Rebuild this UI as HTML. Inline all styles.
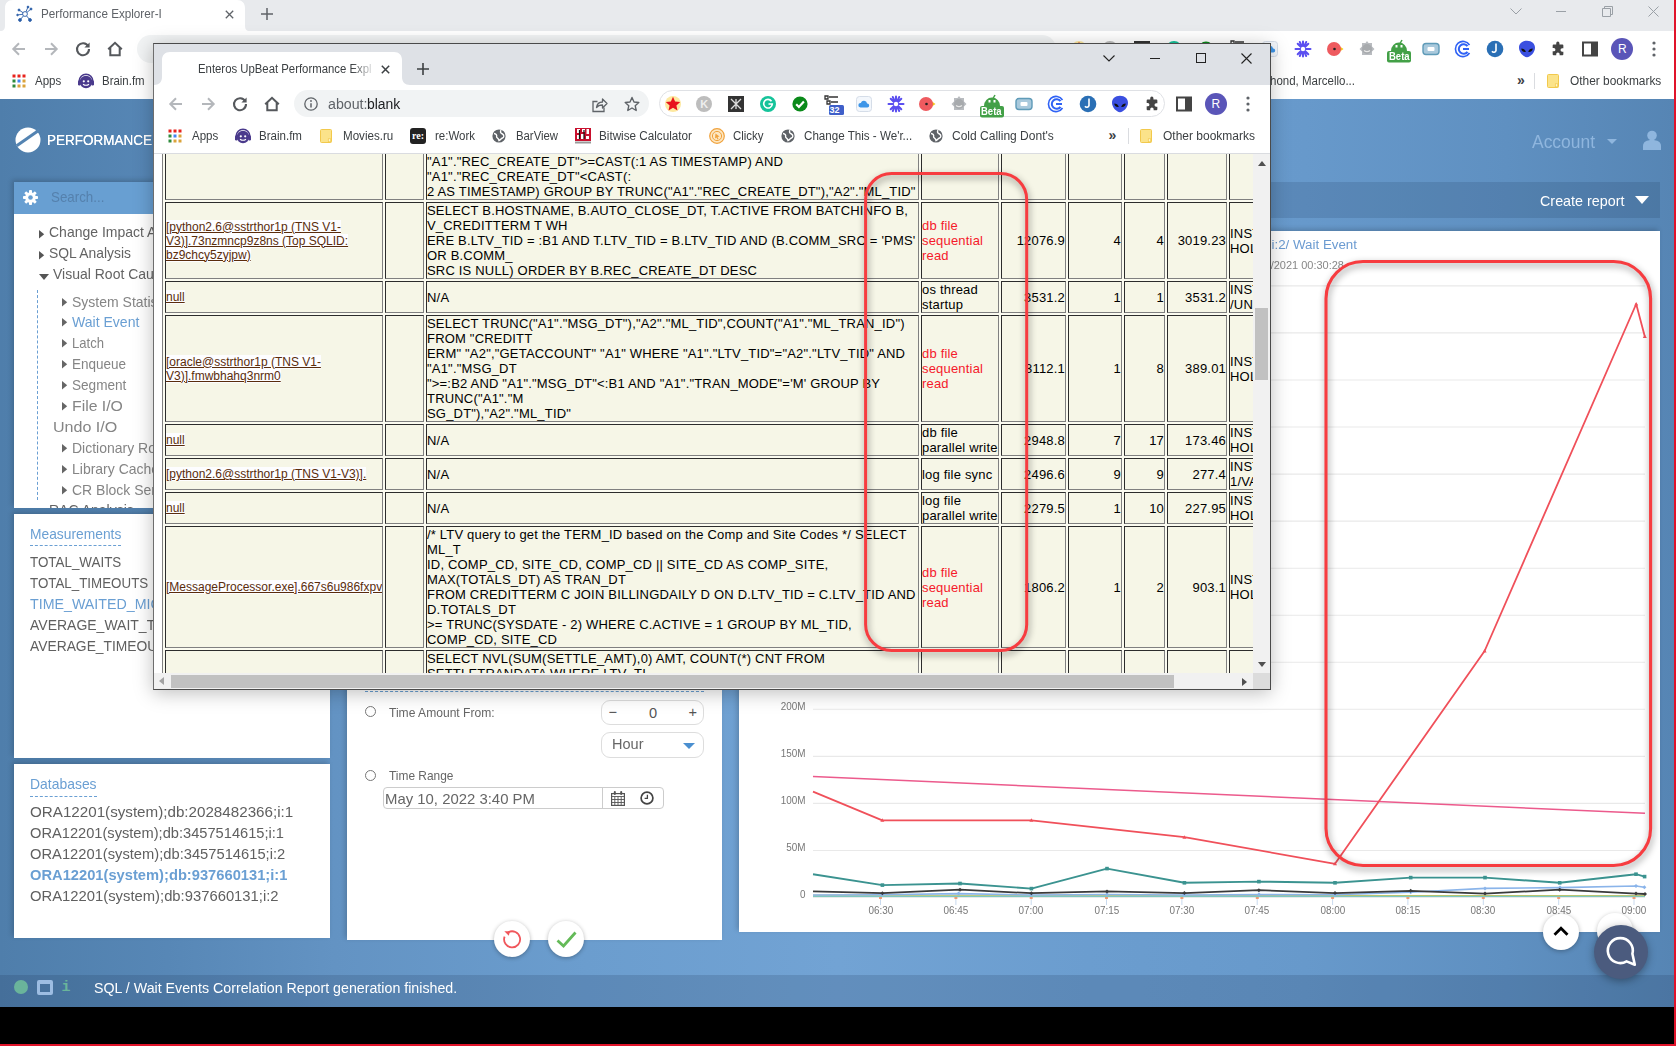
<!DOCTYPE html>
<html lang="en"><head><meta charset="utf-8"><title>Performance Explorer-I</title>
<style>

html,body{margin:0;padding:0}
body{width:1676px;height:1046px;overflow:hidden;position:relative;background:#000;font-family:"Liberation Sans",sans-serif}
.t{position:absolute;white-space:nowrap;transform-origin:0 50%;display:block}
.abs{position:absolute}
svg{position:absolute;overflow:visible}
#page{position:absolute;left:0;top:99px;width:1674px;height:908px;overflow:hidden;
 background:linear-gradient(90deg,#4f7eab 0%,#5787b6 10%,#6393c3 20%,#6b9dce 35%,#72a3d4 50%,#6b9dcf 65%,#6799cb 78%,#5f90c1 90%,#5685b4 100%)}
.panel{position:absolute;background:#fff;overflow:hidden;box-shadow:-2px -2px 5px rgba(0,0,0,.18)}
#popup{position:absolute;left:153px;top:43px;width:1118px;height:647px;background:#dee1e6;box-shadow:0 0 14px 2px rgba(0,0,0,.45);overflow:hidden}
#view{position:absolute;left:1px;top:111px;width:1099px;height:519px;background:#fff;overflow:hidden}
table.g{position:absolute;border-collapse:separate;border-spacing:2px;table-layout:fixed;background:#fbfbf0;border:1px solid;border-color:#808080 #2c2c2c #2c2c2c #808080;font-size:13px;line-height:15px;color:#000}
table.g td{border:1px solid;border-color:#2c2c2c #808080 #808080 #2c2c2c;background:#f6f6e7;padding:0;letter-spacing:.19px;white-space:nowrap;overflow:hidden;vertical-align:middle}
table.g td.n{text-align:right}
table.g td.r{color:#f5192b}
table.g a{font-size:12px;line-height:14px;color:#5a2c0c;background:#fdfdff;text-decoration:underline}
table.g td.l{line-height:14px;font-size:12px;letter-spacing:0}

</style></head>
<body>
<div id="outer"><div style="position:absolute;left:0px;top:0px;width:1674px;height:31px;background:#e8eaed"></div><div style="position:absolute;left:0px;top:31px;width:1674px;height:68px;background:#fff"></div><svg style="left:0;top:0" width="260" height="31" viewBox="0 0 260 31"><path d="M0 31c4 0 5-2 5-6V8c0-5 3-8 8-8h224c5 0 8 3 8 8v17c0 4 1 6 5 6z" fill="#fff"/></svg><svg style="left:16px;top:5px" width="18" height="18" viewBox="0 0 18 18"><g stroke="#2a5ea8" stroke-width=".9" fill="#2a5ea8"><path d="M9 9L3 5M9 9l6-5M9 9l5 6M9 9l-5 6M9 9l-8 1M9 9l3-7" fill="none"/><circle cx="9" cy="9" r="2.400" fill="#fff"/><circle cx="3" cy="5" r="1"/><circle cx="15" cy="4" r="1"/><circle cx="14" cy="15" r="1.400"/><circle cx="4" cy="15" r="1.400"/><circle cx="1.500" cy="10" r=".8"/><circle cx="12" cy="2" r=".9"/></g></svg><span class="t" id="t1" style="left:41.2px;top:6.5px;font-size:12px;line-height:15px;color:#5f6368;transform:scaleX(0.9738);">Performance Explorer-I</span><svg style="left:224.500px;top:9.500px" width="9" height="9" viewBox="0 0 9 9"><path d="M.8.800l7.400 7.400M8.200.800L.8 8.200" stroke="#5f6368" stroke-width="1.300"/></svg><svg style="left:260.500px;top:8px" width="12" height="12" viewBox="0 0 12 12"><path d="M6 0v12M0 6h12" stroke="#5f6368" stroke-width="1.500"/></svg><svg style="left:1510px;top:8px" width="12" height="7" viewBox="0 0 12 7"><path d="M.5.500L6 6l5.500-5.500" fill="none" stroke="#9aa0a6" stroke-width="1"/></svg><div style="position:absolute;left:1556px;top:11px;width:10px;height:1px;background:#9aa0a6"></div><svg style="left:1602px;top:6px" width="11" height="11" viewBox="0 0 11 11"><path d="M.5 2.500h8v8h-8zM2.500 2.500v-2h8v8h-2" fill="none" stroke="#9aa0a6" stroke-width="1"/></svg><svg style="left:1648px;top:6px" width="11" height="11" viewBox="0 0 11 11"><path d="M.5.500l10 10M10.500.500l-10 10" stroke="#9aa0a6" stroke-width="1"/></svg><svg style="left:11px;top:41px" width="16" height="16" viewBox="0 0 16 16"><path d="M14 8H2.5M8 2.3L2.3 8 8 13.7" fill="none" stroke="#b4b7bb" stroke-width="2"/></svg><svg style="left:43px;top:41px" width="16" height="16" viewBox="0 0 16 16"><path d="M2 8h11.5M8 2.3L13.7 8 8 13.7" fill="none" stroke="#b4b7bb" stroke-width="2"/></svg><svg style="left:75px;top:41px" width="16" height="16" viewBox="0 0 16 16"><path d="M13.2 5.2A6 6 0 1 0 14 8" fill="none" stroke="#55585c" stroke-width="2.1"/><path d="M14.6 1.4v5.2H9.4z" fill="#55585c"/></svg><svg style="left:107px;top:41px" width="16" height="16" viewBox="0 0 16 16"><path d="M1.2 8.3L8 1.8l6.8 6.5M3.3 6.8v7.4h9.4V6.8" fill="none" stroke="#55585c" stroke-width="2"/></svg><div style="position:absolute;left:137px;top:35px;width:919px;height:28px;background:#f1f3f4;border-radius:14px"></div><svg style="left:1070.0px;top:40.0px" width="18" height="18" viewBox="0 0 18 18"><circle cx="9" cy="9" r="8" fill="#fde9a0"/><path d="M9 1.800l2.100 4.700 5.100.500-3.800 3.400 1.100 5L9 12.800l-4.500 2.600 1.100-5L1.800 7l5.100-.5z" fill="#e8141c"/></svg><svg style="left:1102.0px;top:41.0px" width="16" height="16" viewBox="0 0 16 16"><circle cx="8" cy="8" r="8" fill="#bdbdbd"/></svg><span class="t" id="t2" style="left:1106.5px;top:42.0px;font-size:11px;line-height:14px;color:#eee;font-weight:700;">K</span><svg style="left:1134.0px;top:41.0px" width="16" height="16" viewBox="0 0 16 16"><rect width="16" height="16" fill="#333"/><path d="M3 3l10 10M13 3L3 13M8 3v10" stroke="#ddd" stroke-width="1.300" fill="none"/></svg><svg style="left:1166.0px;top:41.0px" width="16" height="16" viewBox="0 0 16 16"><circle cx="8" cy="8" r="8" fill="#15c39a"/><path d="M11.500 5.200A4.300 4.300 0 1 0 12.300 8H8.500" fill="none" stroke="#fff" stroke-width="1.600"/></svg><svg style="left:1198.0px;top:41.0px" width="16" height="16" viewBox="0 0 16 16"><circle cx="8" cy="8" r="7.600" fill="#0a8a1a"/><path d="M4.200 8.300l2.700 2.700 5-5.400" fill="none" stroke="#fff" stroke-width="2.200"/></svg><svg style="left:1228.0px;top:38.0px" width="22" height="22" viewBox="0 0 22 22"><path d="M3 3h3v3H3zM5 8h3v3H5zM7 4h9M9 9h7" stroke="#333" stroke-width="1.300" fill="none"/><rect x="7" y="12" width="15" height="10" rx="1.500" fill="#3f5fc9"/></svg><span class="t" id="t3" style="left:1236.0px;top:50.0px;font-size:9px;line-height:11px;color:#fff;font-weight:700;">32</span><svg style="left:1262.0px;top:41.0px" width="16" height="16" viewBox="0 0 16 16"><rect x=".5" y=".5" width="15" height="15" rx="3" fill="#f3f7fc" stroke="#d5dde8"/><path d="M4.500 11.500a2.300 2.300 0 0 1 .300-4.600 3.300 3.300 0 0 1 6.300.600 2 2 0 0 1 .2 4z" fill="#3d95e8"/></svg><svg style="left:1293.8px;top:40.0px" width="18" height="18" viewBox="0 0 18 18"><g stroke="#5b4ff0" stroke-width="2" stroke-linecap="round"><path d="M9 1.500v15M1.500 9h15M3.700 3.700l10.600 10.600M14.300 3.700L3.700 14.300M5.800 2l6.400 14M12.200 2L5.800 16"/></g><circle cx="9" cy="9" r="2.200" fill="#fff"/></svg><svg style="left:1326.0px;top:40.0px" width="18" height="18" viewBox="0 0 18 18"><path d="M11 4.500l6.500 4.500-6.500 4.500z" fill="#f5c518"/><circle cx="8" cy="9" r="7" fill="#ee5a5f"/><circle cx="8.500" cy="9" r="1.300" fill="#222"/></svg><svg style="left:1358.2px;top:40.0px" width="18" height="18" viewBox="0 0 18 18"><path d="M9 1l1.500 2h3.500v3.500l2.500 2.500-2.500 2.500V15H4v-3.500L1.500 9 4 6.500V3h3.500z" fill="#b9bcc0"/><circle cx="9" cy="9" r="5" fill="#a7aaad"/><path d="M6 10.500q3 2.400 6 0" stroke="#e8e8e8" stroke-width="1.200" fill="none"/></svg><svg style="left:1386.0px;top:36.0px" width="26" height="26" viewBox="0 0 26 26"><path d="M5 15a8 8.500 0 0 1 16 0z" fill="#43a047"/><rect x="9.500" y="9" width="2" height="2.500" fill="#fff"/><rect x="14.500" y="9" width="2" height="2.500" fill="#fff"/><path d="M16 4l-2 3.500" stroke="#43a047" stroke-width="1.500"/><rect x="1" y="15" width="24" height="11.500" rx="2" fill="#43a047"/></svg><span class="t" id="t4" style="left:1388.5px;top:51.0px;font-size:10px;line-height:12px;color:#fff;font-weight:700;transform:scaleX(0.9500);">Beta</span><svg style="left:1421.6px;top:40.0px" width="18" height="18" viewBox="0 0 18 18"><rect x="1" y="3.500" width="16" height="11" rx="3" fill="#a9c9dc" stroke="#5f9bb8" stroke-width="1.400"/><rect x="5.500" y="7" width="7" height="4" rx="1" fill="#fff"/></svg><svg style="left:1453.6px;top:40.0px" width="18" height="18" viewBox="0 0 18 18"><path d="M15.500 5A7.600 7.600 0 1 0 15.500 13" fill="none" stroke="#2f62f5" stroke-width="1.600"/><path d="M13.500 6.200A4.800 4.800 0 1 0 13.500 11.800" fill="none" stroke="#2f62f5" stroke-width="2"/><path d="M9 9h6" stroke="#2f62f5" stroke-width="2"/></svg><svg style="left:1485.6px;top:40.0px" width="18" height="18" viewBox="0 0 18 18"><circle cx="9" cy="9" r="8.300" fill="#2a6fb5"/><path d="M10 3.500v7a2.200 2.200 0 0 1-4 .8" fill="none" stroke="#fff" stroke-width="1.600"/></svg><svg style="left:1517.5px;top:40.0px" width="18" height="18" viewBox="0 0 18 18"><path d="M9 .8c5 0 8 3 8 7 0 4.500-4.500 9.400-8 9.400S1 12.300 1 7.800c0-4 3-7 8-7z" fill="#3a4fe0"/><path d="M3.300 8.500c2 0 4 1 4.500 3.500-2.500.5-4.500-1-4.500-3.500zM14.700 8.500c-2 0-4 1-4.500 3.500 2.500.5 4.500-1 4.500-3.500z" fill="#111"/></svg><svg style="left:1550.3px;top:41.0px" width="16" height="16" viewBox="0 0 16 16"><path transform="scale(.89)" d="M7 2.500a1.800 1.800 0 0 1 3.600 0V4H14a1 1 0 0 1 1 1v3.200h-1.300a1.900 1.900 0 0 0 0 3.800H15V15a1 1 0 0 1-1 1h-3.200v-1.300a1.900 1.900 0 0 0-3.800 0V16H4a1 1 0 0 1-1-1v-3.400h1.300a1.800 1.800 0 0 0 0-3.600H3V5a1 1 0 0 1 1-1h3z" fill="#444"/></svg><svg style="left:1582.3px;top:41.0px" width="16" height="16" viewBox="0 0 16 16"><rect x="1" y="1.500" width="14" height="13" fill="none" stroke="#444" stroke-width="2"/><rect x="9" y="1.500" width="6" height="13" fill="#444"/></svg><svg style="left:1611.0px;top:38.0px" width="22" height="22" viewBox="0 0 22 22"><circle cx="11" cy="11" r="11" fill="#5a55b8"/></svg><span class="t" id="t5" style="left:1618.0px;top:42.0px;font-size:12px;line-height:15px;color:#fff;">R</span><svg style="left:1652.3px;top:41.0px" width="4" height="16" viewBox="0 0 4 16"><circle cx="2" cy="2" r="1.600" fill="#5f6368"/><circle cx="2" cy="8" r="1.600" fill="#5f6368"/><circle cx="2" cy="14" r="1.600" fill="#5f6368"/></svg><svg style="left:11.5px;top:74px" width="14" height="14" viewBox="0 0 14 14"><rect x="0.5" y="0.5" width="3" height="3" fill="#e8231c"/><rect x="5.5" y="0.5" width="3" height="3" fill="#e8231c"/><rect x="10.5" y="0.5" width="3" height="3" fill="#e8231c"/><rect x="0.5" y="5.5" width="3" height="3" fill="#2e8b3d"/><rect x="5.5" y="5.5" width="3" height="3" fill="#4285f4"/><rect x="10.5" y="5.5" width="3" height="3" fill="#dba33b"/><rect x="0.5" y="10.5" width="3" height="3" fill="#2e8b3d"/><rect x="5.5" y="10.5" width="3" height="3" fill="#dba33b"/><rect x="10.5" y="10.5" width="3" height="3" fill="#dba33b"/></svg><span class="t" id="t6" style="left:35.4px;top:73.5px;font-size:12px;line-height:15px;color:#3c4043;transform:scaleX(0.9613);">Apps</span><svg style="left:77px;top:72px" width="18" height="18" viewBox="0 0 18 18"><circle cx="9" cy="10" r="6.2" fill="#4a3a8c"/><path d="M2.2 11V9a6.8 6.8 0 0 1 13.6 0v2" fill="none" stroke="#4a3a8c" stroke-width="1.6"/><rect x="1" y="8.5" width="2.8" height="5" rx="1.2" fill="#4a3a8c"/><rect x="14.2" y="8.5" width="2.8" height="5" rx="1.2" fill="#4a3a8c"/><circle cx="6.8" cy="9.3" r="1.1" fill="#fff"/><circle cx="11.2" cy="9.3" r="1.1" fill="#fff"/><path d="M6 12.2q3 2.2 6 0" stroke="#fff" stroke-width="1.1" fill="none"/></svg><span class="t" id="t7" style="left:102.4px;top:73.5px;font-size:12px;line-height:15px;color:#3c4043;transform:scaleX(0.9533);">Brain.fm</span><span class="t" id="t8" style="left:1270.0px;top:73.5px;font-size:12px;line-height:15px;color:#3c4043;transform:scaleX(0.9581);">hond, Marcello...</span><span class="t" id="t9" style="left:1517.0px;top:71.0px;font-size:14px;line-height:18px;color:#3c4043;font-weight:700;">»</span><div style="position:absolute;left:1534px;top:73px;width:1px;height:16px;background:#dadce0"></div><svg style="left:1547px;top:74px" width="12" height="14" viewBox="0 0 12 14"><path d="M1.5.5h9a1 1 0 0 1 1 1v11a1 1 0 0 1-1 1h-9a1 1 0 0 1-1-1v-11a1 1 0 0 1 1-1z" fill="#fbe38a" stroke="#f2c94c" stroke-width="1"/><rect x="8.3" y="9.8" width="2.4" height="3" fill="#fff6cf" stroke="#f2c94c" stroke-width=".7"/></svg><span class="t" id="t10" style="left:1569.7px;top:73.5px;font-size:12px;line-height:15px;color:#3c4043;transform:scaleX(0.9919);">Other bookmarks</span></div>
<div id="page"></div><svg style="left:15.200px;top:127.200px" width="26" height="26" viewBox="0 0 26 26"><circle cx="13" cy="13" r="12.500" fill="#fff"/><path d="M1.700 18.800L24.300 3" stroke="#5484b2" stroke-width="3"/></svg><span class="t" id="t11" style="left:47.4px;top:130.1px;font-size:14.6px;line-height:20px;color:#fff;transform:scaleX(0.9259);text-shadow:0 0 .6px #fff;">PERFORMANCE</span><span class="t" id="t12" style="left:1532.0px;top:128.6px;font-size:18.3px;line-height:25px;color:#8fb6de;transform:scaleX(0.9536);">Account</span><svg style="left:1607px;top:139px" width="10" height="5" viewBox="0 0 10 5"><path d="M0 0h10L5 5z" fill="#8fb6de"/></svg><svg style="left:1643px;top:130px" width="18" height="20" viewBox="0 0 18 20"><circle cx="9" cy="5.500" r="4.800" fill="#8fb6de"/><path d="M0 20v-4c0-4 3.500-6 9-6s9 2 9 6v4z" fill="#8fb6de"/></svg><div class="panel" style="left:14px;top:182px;width:316px;height:326px;"><div style="position:absolute;left:-14px;top:-182px;width:0;height:0"><div style="position:absolute;left:14px;top:182px;width:316px;height:32px;background:#689fd2"></div><svg style="left:22.500px;top:190px" width="15" height="15" viewBox="0 0 15 15"><g fill="#fff"><circle cx="7.500" cy="7.500" r="5.300"/><rect x="6" y="0" width="3" height="15" rx=".8" transform="rotate(0 7.500 7.500)"/><rect x="6" y="0" width="3" height="15" rx=".8" transform="rotate(45 7.500 7.500)"/><rect x="6" y="0" width="3" height="15" rx=".8" transform="rotate(90 7.500 7.500)"/><rect x="6" y="0" width="3" height="15" rx=".8" transform="rotate(135 7.500 7.500)"/></g><circle cx="7.500" cy="7.500" r="2.300" fill="#689fd2"/></svg><span class="t" id="t13" style="left:50.6px;top:187.3px;font-size:14.6px;line-height:20px;color:#5581ad;transform:scaleX(0.9143);">Search...</span><svg style="left:39px;top:230.0px" width="5.200" height="8.400" viewBox="0 0 5.200 8.400"><path d="M0 0l5.200 4.200L0 8.400z" fill="#555"/></svg><span class="t" id="t14" style="left:49.0px;top:222.1px;font-size:14.6px;line-height:20px;color:#636363;transform:scaleX(0.9589);">Change Impact Analysis</span><svg style="left:39px;top:251.0px" width="5.200" height="8.400" viewBox="0 0 5.200 8.400"><path d="M0 0l5.200 4.200L0 8.400z" fill="#555"/></svg><span class="t" id="t15" style="left:49.0px;top:243.1px;font-size:14.6px;line-height:20px;color:#636363;transform:scaleX(0.9506);">SQL Analysis</span><svg style="left:39px;top:274px" width="10" height="6" viewBox="0 0 10 6"><path d="M0 0h10L5 6z" fill="#555"/></svg><span class="t" id="t16" style="left:52.6px;top:263.6px;font-size:14.6px;line-height:20px;color:#636363;transform:scaleX(0.9589);">Visual Root Cause Analysis</span><div style="position:absolute;left:37px;top:290px;width:1px;height:210px;border-left:1px dashed #6a9fd3"></div><svg style="left:62px;top:297.90000000000003px" width="5.200" height="8.400" viewBox="0 0 5.200 8.400"><path d="M0 0l5.200 4.200L0 8.400z" fill="#666"/></svg><span class="t" id="t17" style="left:71.6px;top:291.7px;font-size:14.6px;line-height:20px;color:#858585;transform:scaleX(0.9589);">System Statistics</span><svg style="left:62px;top:318.40000000000003px" width="5.200" height="8.400" viewBox="0 0 5.200 8.400"><path d="M0 0l5.200 4.200L0 8.400z" fill="#666"/></svg><span class="t" id="t18" style="left:71.6px;top:312.2px;font-size:14.6px;line-height:20px;color:#6a9fd3;transform:scaleX(0.9624);">Wait Event</span><svg style="left:62px;top:339.40000000000003px" width="5.200" height="8.400" viewBox="0 0 5.200 8.400"><path d="M0 0l5.200 4.200L0 8.400z" fill="#666"/></svg><span class="t" id="t19" style="left:71.6px;top:333.2px;font-size:14.6px;line-height:20px;color:#858585;transform:scaleX(0.8963);">Latch</span><svg style="left:62px;top:360.40000000000003px" width="5.200" height="8.400" viewBox="0 0 5.200 8.400"><path d="M0 0l5.200 4.200L0 8.400z" fill="#666"/></svg><span class="t" id="t20" style="left:71.6px;top:354.2px;font-size:14.6px;line-height:20px;color:#858585;transform:scaleX(0.9258);">Enqueue</span><svg style="left:62px;top:381.40000000000003px" width="5.200" height="8.400" viewBox="0 0 5.200 8.400"><path d="M0 0l5.200 4.200L0 8.400z" fill="#666"/></svg><span class="t" id="t21" style="left:71.6px;top:375.2px;font-size:14.6px;line-height:20px;color:#858585;transform:scaleX(0.9312);">Segment</span><svg style="left:62px;top:402.40000000000003px" width="5.200" height="8.400" viewBox="0 0 5.200 8.400"><path d="M0 0l5.200 4.200L0 8.400z" fill="#666"/></svg><span class="t" id="t22" style="left:71.6px;top:396.2px;font-size:14.6px;line-height:20px;color:#858585;transform:scaleX(1.0823);">File I/O</span><span class="t" id="t23" style="left:53.4px;top:417.2px;font-size:14.6px;line-height:20px;color:#858585;transform:scaleX(1.1009);">Undo I/O</span><svg style="left:62px;top:444.40000000000003px" width="5.200" height="8.400" viewBox="0 0 5.200 8.400"><path d="M0 0l5.200 4.200L0 8.400z" fill="#666"/></svg><span class="t" id="t24" style="left:71.6px;top:438.2px;font-size:14.6px;line-height:20px;color:#858585;transform:scaleX(0.9589);">Dictionary Row Cache</span><svg style="left:62px;top:465.40000000000003px" width="5.200" height="8.400" viewBox="0 0 5.200 8.400"><path d="M0 0l5.200 4.200L0 8.400z" fill="#666"/></svg><span class="t" id="t25" style="left:71.6px;top:459.2px;font-size:14.6px;line-height:20px;color:#858585;transform:scaleX(0.9589);">Library Cache</span><svg style="left:62px;top:486.40000000000003px" width="5.200" height="8.400" viewBox="0 0 5.200 8.400"><path d="M0 0l5.200 4.200L0 8.400z" fill="#666"/></svg><span class="t" id="t26" style="left:71.6px;top:480.2px;font-size:14.6px;line-height:20px;color:#858585;transform:scaleX(0.9589);">CR Block Server</span><span class="t" id="t27" style="left:48.5px;top:500.0px;font-size:14.6px;line-height:20px;color:#636363;transform:scaleX(0.9589);">RAC Analysis</span></div></div><div class="panel" style="left:14px;top:514px;width:316px;height:244px;"><div style="position:absolute;left:-14px;top:-514px;width:0;height:0"><span class="t" id="t28" style="left:30.0px;top:523.5px;font-size:14.6px;line-height:20px;color:#6a9fd3;transform:scaleX(0.9458);">Measurements</span><div style="position:absolute;left:30px;top:545px;width:91px;height:1px;border-top:1px dashed #6a9fd3"></div><span class="t" id="t29" style="left:30.0px;top:552.1px;font-size:14.6px;line-height:20px;color:#606060;transform:scaleX(0.9177);">TOTAL_WAITS</span><span class="t" id="t30" style="left:30.0px;top:573.2px;font-size:14.6px;line-height:20px;color:#606060;transform:scaleX(0.9148);">TOTAL_TIMEOUTS</span><span class="t" id="t31" style="left:30.0px;top:594.0px;font-size:14.6px;line-height:20px;color:#6a9fd3;transform:scaleX(0.9753);">TIME_WAITED_MICRO</span><span class="t" id="t32" style="left:30.0px;top:615.0px;font-size:14.6px;line-height:20px;color:#606060;transform:scaleX(0.9589);">AVERAGE_WAIT_TIME_MICRO</span><span class="t" id="t33" style="left:30.0px;top:636.3px;font-size:14.6px;line-height:20px;color:#606060;transform:scaleX(0.9479);">AVERAGE_TIMEOUTS</span></div></div><div class="panel" style="left:14px;top:764px;width:316px;height:174px;"><div style="position:absolute;left:-14px;top:-764px;width:0;height:0"><span class="t" id="t34" style="left:30.0px;top:773.6px;font-size:14.6px;line-height:20px;color:#6a9fd3;transform:scaleX(0.9544);">Databases</span><div style="position:absolute;left:30px;top:796px;width:67px;height:1px;border-top:1px dashed #6a9fd3"></div><span class="t" id="t35" style="left:30.0px;top:801.6px;font-size:14.6px;line-height:20px;color:#606060;transform:scaleX(1.0398);">ORA12201(system);db:2028482366;i:1</span><span class="t" id="t36" style="left:30.0px;top:822.6px;font-size:14.6px;line-height:20px;color:#606060;transform:scaleX(1.0035);">ORA12201(system);db:3457514615;i:1</span><span class="t" id="t37" style="left:30.0px;top:843.6px;font-size:14.6px;line-height:20px;color:#606060;transform:scaleX(1.0082);">ORA12201(system);db:3457514615;i:2</span><span class="t" id="t38" style="left:30.0px;top:864.6px;font-size:14.6px;line-height:20px;color:#6a9fd3;font-weight:700;transform:scaleX(1.0073);">ORA12201(system);db:937660131;i:1</span><span class="t" id="t39" style="left:30.0px;top:885.6px;font-size:14.6px;line-height:20px;color:#606060;transform:scaleX(1.0146);">ORA12201(system);db:937660131;i:2</span></div></div><div class="panel" style="left:347px;top:182px;width:375px;height:758px;"><div style="position:absolute;left:-347px;top:-182px;width:0;height:0"><div style="position:absolute;left:365px;top:691px;width:339px;height:1px;border-top:1px dashed #6a9fd3"></div><div style="position:absolute;left:365.0px;top:706.2px;width:11.0px;height:11.0px;border:1px solid #777;border-radius:50%;box-sizing:border-box;background:#fff"></div><span class="t" id="t40" style="left:389.0px;top:703.7px;font-size:12.8px;line-height:18px;color:#666;transform:scaleX(0.9438);">Time Amount From:</span><div style="position:absolute;left:601px;top:700.3px;width:103px;height:24.300000000000068px;border:1px solid #ddd;border-radius:9px;box-sizing:border-box"></div><span class="t" id="t41" style="left:608.5px;top:702.0px;font-size:14.6px;line-height:20px;color:#555;">−</span><span class="t" id="t42" style="left:649.0px;top:702.6px;font-size:14.6px;line-height:21px;color:#555;">0</span><span class="t" id="t43" style="left:688.5px;top:702.0px;font-size:14.6px;line-height:20px;color:#555;">+</span><div style="position:absolute;left:601px;top:732px;width:103px;height:25.5px;border:1px solid #ddd;border-radius:9px;box-sizing:border-box"></div><span class="t" id="t44" style="left:612.0px;top:734.4px;font-size:14.6px;line-height:20px;color:#666;transform:scaleX(0.9956);">Hour</span><svg style="left:683px;top:742.500px" width="12" height="6" viewBox="0 0 12 6"><path d="M0 0h12L6 6z" fill="#4a8fd0"/></svg><div style="position:absolute;left:365.0px;top:769.5px;width:11.0px;height:11.0px;border:1px solid #777;border-radius:50%;box-sizing:border-box;background:#fff"></div><span class="t" id="t45" style="left:389.0px;top:767.0px;font-size:12.8px;line-height:18px;color:#666;transform:scaleX(0.9302);">Time Range</span><div style="position:absolute;left:383px;top:787px;width:281px;height:21.799999999999955px;border:1px solid #ccc;border-radius:4px;box-sizing:border-box"></div><div style="position:absolute;left:602px;top:787px;width:1px;height:21.799999999999955px;background:#ccc"></div><span class="t" id="t46" style="left:384.6px;top:788.8px;font-size:14.2px;line-height:20px;color:#666;transform:scaleX(1.0501);">May 10, 2022 3:40 PM</span><svg style="left:610.500px;top:790.500px" width="14" height="15" viewBox="0 0 14 15"><rect x=".6" y="2.600" width="12.800" height="11.800" fill="none" stroke="#555" stroke-width="1.200"/><path d="M.6 5.500h12.800M.6 8.500h12.800M.6 11.500h12.800M3.800 5.500v9M7 5.500v9M10.200 5.500v9" stroke="#555" stroke-width=".9"/><rect x="2.800" y="0" width="2" height="4" rx="1" fill="#555"/><rect x="9.200" y="0" width="2" height="4" rx="1" fill="#555"/></svg><svg style="left:639.500px;top:791px" width="14" height="14" viewBox="0 0 14 14"><circle cx="7" cy="7" r="5.900" fill="none" stroke="#444" stroke-width="1.700"/><path d="M7.400 3.800v3.600H4.600" fill="none" stroke="#444" stroke-width="1.300"/></svg></div></div><div style="position:absolute;left:493.5px;top:921px;width:36.0px;height:36px;background:#fff;border-radius:50%;box-shadow:0 1px 4px rgba(0,0,0,.3)"><svg style="left:8px;top:8px" width="20" height="20" viewBox="0 0 20 20"><path d="M6.300 3.300A8 8 0 1 1 2.600 7.600" fill="none" stroke="#f0565b" stroke-width="1.800"/><path d="M2.300 2.300l5.700 0-1.200 4.500z" fill="#f0565b"/></svg></div><div style="position:absolute;left:548px;top:921px;width:36px;height:36px;background:#fff;border-radius:50%;box-shadow:0 1px 4px rgba(0,0,0,.3)"><svg style="left:8px;top:10px" width="21" height="17" viewBox="0 0 21 17"><path d="M1.500 9.500l6 5.500L19.500 1.500" fill="none" stroke="#64ba58" stroke-width="2.800"/></svg></div><div style="position:absolute;left:739px;top:182px;width:921px;height:36px;background:rgba(10,30,60,.135)"></div><span class="t" id="t47" style="left:1539.8px;top:191.0px;font-size:14.6px;line-height:20px;color:#fff;transform:scaleX(0.9827);">Create report</span><svg style="left:1634.500px;top:196px" width="14" height="8" viewBox="0 0 14 8"><path d="M0 0h14L7 8z" fill="#fff"/></svg><div style="position:absolute;left:0px;top:975px;width:1674px;height:32px;background:rgba(20,40,70,.16)"></div><div style="position:absolute;left:14px;top:980px;width:14px;height:14px;background:#6ab49b;border-radius:50%"></div><div style="position:absolute;left:36.5px;top:980px;width:16.5px;height:14.5px;border:3px solid #9dbde2;border-top-width:4px;box-sizing:border-box;border-radius:2px"></div><span class="t" id="t48" style="left:61.5px;top:977.5px;font-size:15.0px;line-height:19px;color:#6ab49b;font-weight:700;font-family:'Liberation Mono',monospace;">i</span><span class="t" id="t49" style="left:93.8px;top:979.0px;font-size:14.7px;line-height:19px;color:#fff;transform:scaleX(0.9678);">SQL / Wait Events Correlation Report generation finished.</span>
<div class="panel" style="left:739px;top:230.5px;width:921px;height:701.5px;"><div style="position:absolute;left:-739px;top:-230.5px;width:0;height:0"><span class="t" id="t50" style="left:957.0px;top:235.2px;font-size:13.7px;line-height:19px;color:#6b9bd1;transform:scaleX(0.9745);width:400px;text-align:right;transform-origin:100% 50%;">ORA12201(system);db:937660131;i:2/ Wait Event</span><span class="t" id="t51" style="left:1144.4px;top:259.2px;font-size:10.1px;line-height:14px;color:#888;transform:scaleX(1.0891);width:200px;text-align:right;transform-origin:100% 50%;">09/10/2021 00:30:28</span><svg style="left:0;top:0" width="1676" height="1046" viewBox="0 0 1676 1046"><path d="M813 897.5H1645" stroke="#e9e9e9" stroke-width="1.100"/><path d="M813 850.5H1645" stroke="#e9e9e9" stroke-width="1.100"/><path d="M813 803.4H1645" stroke="#e9e9e9" stroke-width="1.100"/><path d="M813 756.4H1645" stroke="#e9e9e9" stroke-width="1.100"/><path d="M813 709.3H1645" stroke="#e9e9e9" stroke-width="1.100"/><path d="M813 662.2H1645" stroke="#e9e9e9" stroke-width="1.100"/><path d="M813 615.2H1645" stroke="#e9e9e9" stroke-width="1.100"/><path d="M813 568.2H1645" stroke="#e9e9e9" stroke-width="1.100"/><path d="M813 521.1H1645" stroke="#e9e9e9" stroke-width="1.100"/><path d="M813 474.1H1645" stroke="#e9e9e9" stroke-width="1.100"/><path d="M813 427.0H1645" stroke="#e9e9e9" stroke-width="1.100"/><path d="M813 380.0H1645" stroke="#e9e9e9" stroke-width="1.100"/><path d="M813 332.9H1645" stroke="#e9e9e9" stroke-width="1.100"/><path d="M813 285.9H1645" stroke="#e9e9e9" stroke-width="1.100"/><path d="M880.5 897v8" stroke="#c9daee" stroke-width="1"/><path d="M955.9 897v8" stroke="#c9daee" stroke-width="1"/><path d="M1031.2 897v8" stroke="#c9daee" stroke-width="1"/><path d="M1106.5 897v8" stroke="#c9daee" stroke-width="1"/><path d="M1181.9 897v8" stroke="#c9daee" stroke-width="1"/><path d="M1257.2 897v8" stroke="#c9daee" stroke-width="1"/><path d="M1332.6 897v8" stroke="#c9daee" stroke-width="1"/><path d="M1407.9 897v8" stroke="#c9daee" stroke-width="1"/><path d="M1483.3 897v8" stroke="#c9daee" stroke-width="1"/><path d="M1558.7 897v8" stroke="#c9daee" stroke-width="1"/><path d="M1634.0 897v8" stroke="#c9daee" stroke-width="1"/><path d="M813.0 896.3L1645.0 896.3" fill="none" stroke="#7dc8c0" stroke-width="1.6" stroke-linejoin="round"/><path d="M813.0 895.2L1645.0 895.6" fill="none" stroke="#b9c36b" stroke-width="1" stroke-linejoin="round"/><path d="M813.0 895.0L882.0 894.8L958.6 893.6L1031.0 895.0L1107.0 894.5L1184.0 895.0L1259.0 894.6L1335.0 894.8L1410.7 892.3L1485.0 888.4L1560.0 887.6L1636.0 886.0L1644.4 887.2" fill="none" stroke="#8ab4ea" stroke-width="1.6" stroke-linejoin="round"/><path d="M880.0 894.8l2-2 2 2-2 2z" fill="#8ab4ea"/><path d="M956.6 893.6l2-2 2 2-2 2z" fill="#8ab4ea"/><path d="M1029.0 895.0l2-2 2 2-2 2z" fill="#8ab4ea"/><path d="M1105.0 894.5l2-2 2 2-2 2z" fill="#8ab4ea"/><path d="M1182.0 895.0l2-2 2 2-2 2z" fill="#8ab4ea"/><path d="M1257.0 894.6l2-2 2 2-2 2z" fill="#8ab4ea"/><path d="M1333.0 894.8l2-2 2 2-2 2z" fill="#8ab4ea"/><path d="M1408.7 892.3l2-2 2 2-2 2z" fill="#8ab4ea"/><path d="M1483.0 888.4l2-2 2 2-2 2z" fill="#8ab4ea"/><path d="M1558.0 887.6l2-2 2 2-2 2z" fill="#8ab4ea"/><path d="M1634.0 886.0l2-2 2 2-2 2z" fill="#8ab4ea"/><path d="M1642.4 887.2l2-2 2 2-2 2z" fill="#8ab4ea"/><path d="M813.0 891.4L882.4 893.2L960.0 889.7L1031.4 893.2L1107.0 891.4L1184.4 893.1L1258.9 890.2L1335.0 893.1L1410.7 890.8L1485.0 893.6L1559.7 889.7L1636.0 893.6L1645.0 894.0" fill="none" stroke="#3a3a3a" stroke-width="1.8" stroke-linejoin="round"/><path d="M880.4 893.2l2-2 2 2-2 2z" fill="#3a3a3a"/><path d="M958.0 889.7l2-2 2 2-2 2z" fill="#3a3a3a"/><path d="M1029.4 893.2l2-2 2 2-2 2z" fill="#3a3a3a"/><path d="M1105.0 891.4l2-2 2 2-2 2z" fill="#3a3a3a"/><path d="M1182.4 893.1l2-2 2 2-2 2z" fill="#3a3a3a"/><path d="M1256.9 890.2l2-2 2 2-2 2z" fill="#3a3a3a"/><path d="M1333.0 893.1l2-2 2 2-2 2z" fill="#3a3a3a"/><path d="M1408.7 890.8l2-2 2 2-2 2z" fill="#3a3a3a"/><path d="M1483.0 893.6l2-2 2 2-2 2z" fill="#3a3a3a"/><path d="M1557.7 889.7l2-2 2 2-2 2z" fill="#3a3a3a"/><path d="M1634.0 893.6l2-2 2 2-2 2z" fill="#3a3a3a"/><path d="M1643.0 894.0l2-2 2 2-2 2z" fill="#3a3a3a"/><path d="M813.0 874.2L882.4 885.1L960.0 883.5L1031.4 888.6L1107.0 868.6L1184.4 882.8L1258.9 881.6L1335.0 882.8L1410.7 877.6L1485.0 877.6L1559.7 882.8L1636.0 874.2L1644.6 876.6" fill="none" stroke="#3b9390" stroke-width="1.9" stroke-linejoin="round"/><rect x="880.6" y="883.3" width="3.600" height="3.600" fill="#3b9390"/><rect x="958.2" y="881.7" width="3.600" height="3.600" fill="#3b9390"/><rect x="1029.6" y="886.8" width="3.600" height="3.600" fill="#3b9390"/><rect x="1105.2" y="866.8" width="3.600" height="3.600" fill="#3b9390"/><rect x="1182.6" y="881.0" width="3.600" height="3.600" fill="#3b9390"/><rect x="1257.1" y="879.8" width="3.600" height="3.600" fill="#3b9390"/><rect x="1333.2" y="881.0" width="3.600" height="3.600" fill="#3b9390"/><rect x="1408.9" y="875.8" width="3.600" height="3.600" fill="#3b9390"/><rect x="1483.2" y="875.8" width="3.600" height="3.600" fill="#3b9390"/><rect x="1557.9" y="881.0" width="3.600" height="3.600" fill="#3b9390"/><rect x="1634.2" y="872.4" width="3.600" height="3.600" fill="#3b9390"/><rect x="1642.8" y="874.8" width="3.600" height="3.600" fill="#3b9390"/><path d="M813.0 776.6L1645.0 813.2" fill="none" stroke="#ec5a8c" stroke-width="1.5" stroke-linejoin="round"/><path d="M813.0 791.7L882.3 820.3L1031.4 820.3L1184.4 837.2L1335.0 863.8L1484.6 651.0L1636.2 304.0L1644.8 336.6" fill="none" stroke="#f0505a" stroke-width="1.8" stroke-linejoin="round"/><path d="M880.3 821.8h4l-2-3.500z" fill="#f0505a"/><path d="M1029.4 821.8h4l-2-3.500z" fill="#f0505a"/><path d="M1182.4 838.7h4l-2-3.500z" fill="#f0505a"/><path d="M1333.0 865.3h4l-2-3.500z" fill="#f0505a"/><path d="M1482.6 652.5h4l-2-3.500z" fill="#f0505a"/><path d="M1634.2 305.5h4l-2-3.500z" fill="#f0505a"/><path d="M1642.8 338.1h4l-2-3.500z" fill="#f0505a"/><rect x="879.0" y="897.200" width="3" height="1.600" fill="#f08a5a"/><rect x="954.4" y="897.200" width="3" height="1.600" fill="#f08a5a"/><rect x="1029.7" y="897.200" width="3" height="1.600" fill="#f08a5a"/><rect x="1105.0" y="897.200" width="3" height="1.600" fill="#f08a5a"/><rect x="1180.4" y="897.200" width="3" height="1.600" fill="#f08a5a"/><rect x="1255.8" y="897.200" width="3" height="1.600" fill="#f08a5a"/><rect x="1331.1" y="897.200" width="3" height="1.600" fill="#f08a5a"/><rect x="1406.4" y="897.200" width="3" height="1.600" fill="#f08a5a"/><rect x="1481.8" y="897.200" width="3" height="1.600" fill="#f08a5a"/><rect x="1557.2" y="897.200" width="3" height="1.600" fill="#f08a5a"/><rect x="1632.5" y="897.200" width="3" height="1.600" fill="#f08a5a"/></svg><span class="t" id="t52" style="left:770.0px;top:887.9px;font-size:10.1px;line-height:14px;color:#777;transform:scaleX(0.9802);width:35.500px;text-align:right;transform-origin:100% 50%;">0</span><span class="t" id="t53" style="left:770.0px;top:840.9px;font-size:10.1px;line-height:14px;color:#777;transform:scaleX(0.9802);width:35.500px;text-align:right;transform-origin:100% 50%;">50M</span><span class="t" id="t54" style="left:770.0px;top:793.8px;font-size:10.1px;line-height:14px;color:#777;transform:scaleX(0.9802);width:35.500px;text-align:right;transform-origin:100% 50%;">100M</span><span class="t" id="t55" style="left:770.0px;top:746.8px;font-size:10.1px;line-height:14px;color:#777;transform:scaleX(0.9802);width:35.500px;text-align:right;transform-origin:100% 50%;">150M</span><span class="t" id="t56" style="left:770.0px;top:699.7px;font-size:10.1px;line-height:14px;color:#777;transform:scaleX(0.9802);width:35.500px;text-align:right;transform-origin:100% 50%;">200M</span><span class="t" id="t57" style="left:770.0px;top:652.7px;font-size:10.1px;line-height:14px;color:#777;transform:scaleX(0.9802);width:35.500px;text-align:right;transform-origin:100% 50%;">250M</span><span class="t" id="t58" style="left:770.0px;top:605.6px;font-size:10.1px;line-height:14px;color:#777;transform:scaleX(0.9802);width:35.500px;text-align:right;transform-origin:100% 50%;">300M</span><span class="t" id="t59" style="left:770.0px;top:558.6px;font-size:10.1px;line-height:14px;color:#777;transform:scaleX(0.9802);width:35.500px;text-align:right;transform-origin:100% 50%;">350M</span><span class="t" id="t60" style="left:770.0px;top:511.5px;font-size:10.1px;line-height:14px;color:#777;transform:scaleX(0.9802);width:35.500px;text-align:right;transform-origin:100% 50%;">400M</span><span class="t" id="t61" style="left:770.0px;top:464.5px;font-size:10.1px;line-height:14px;color:#777;transform:scaleX(0.9802);width:35.500px;text-align:right;transform-origin:100% 50%;">450M</span><span class="t" id="t62" style="left:770.0px;top:417.4px;font-size:10.1px;line-height:14px;color:#777;transform:scaleX(0.9802);width:35.500px;text-align:right;transform-origin:100% 50%;">500M</span><span class="t" id="t63" style="left:770.0px;top:370.4px;font-size:10.1px;line-height:14px;color:#777;transform:scaleX(0.9802);width:35.500px;text-align:right;transform-origin:100% 50%;">550M</span><span class="t" id="t64" style="left:770.0px;top:323.3px;font-size:10.1px;line-height:14px;color:#777;transform:scaleX(0.9802);width:35.500px;text-align:right;transform-origin:100% 50%;">600M</span><span class="t" id="t65" style="left:770.0px;top:276.3px;font-size:10.1px;line-height:14px;color:#777;transform:scaleX(0.9802);width:35.500px;text-align:right;transform-origin:100% 50%;">650M</span><span class="t" id="t66" style="left:860.5px;top:904.1px;font-size:10.1px;line-height:14px;color:#777;transform:scaleX(0.9802);width:40px;text-align:center;transform-origin:50% 50%;">06:30</span><span class="t" id="t67" style="left:935.9px;top:904.1px;font-size:10.1px;line-height:14px;color:#777;transform:scaleX(0.9802);width:40px;text-align:center;transform-origin:50% 50%;">06:45</span><span class="t" id="t68" style="left:1011.2px;top:904.1px;font-size:10.1px;line-height:14px;color:#777;transform:scaleX(0.9802);width:40px;text-align:center;transform-origin:50% 50%;">07:00</span><span class="t" id="t69" style="left:1086.5px;top:904.1px;font-size:10.1px;line-height:14px;color:#777;transform:scaleX(0.9802);width:40px;text-align:center;transform-origin:50% 50%;">07:15</span><span class="t" id="t70" style="left:1161.9px;top:904.1px;font-size:10.1px;line-height:14px;color:#777;transform:scaleX(0.9802);width:40px;text-align:center;transform-origin:50% 50%;">07:30</span><span class="t" id="t71" style="left:1237.2px;top:904.1px;font-size:10.1px;line-height:14px;color:#777;transform:scaleX(0.9802);width:40px;text-align:center;transform-origin:50% 50%;">07:45</span><span class="t" id="t72" style="left:1312.6px;top:904.1px;font-size:10.1px;line-height:14px;color:#777;transform:scaleX(0.9802);width:40px;text-align:center;transform-origin:50% 50%;">08:00</span><span class="t" id="t73" style="left:1387.9px;top:904.1px;font-size:10.1px;line-height:14px;color:#777;transform:scaleX(0.9802);width:40px;text-align:center;transform-origin:50% 50%;">08:15</span><span class="t" id="t74" style="left:1463.3px;top:904.1px;font-size:10.1px;line-height:14px;color:#777;transform:scaleX(0.9802);width:40px;text-align:center;transform-origin:50% 50%;">08:30</span><span class="t" id="t75" style="left:1538.7px;top:904.1px;font-size:10.1px;line-height:14px;color:#777;transform:scaleX(0.9802);width:40px;text-align:center;transform-origin:50% 50%;">08:45</span><span class="t" id="t76" style="left:1614.0px;top:904.1px;font-size:10.1px;line-height:14px;color:#777;transform:scaleX(0.9802);width:40px;text-align:center;transform-origin:50% 50%;">09:00</span></div></div>
<div style="position:absolute;left:1596.5px;top:913px;width:36.0px;height:36px;background:#fff;border-radius:50%;box-shadow:0 1px 4px rgba(0,0,0,.25)"></div><div style="position:absolute;left:1543px;top:914px;width:36px;height:36px;background:#fff;border-radius:50%;box-shadow:0 1px 5px rgba(0,0,0,.3)"><svg style="left:10px;top:12px" width="16" height="10" viewBox="0 0 16 10"><path d="M1.500 8.800L8 2.200l6.500 6.600" fill="none" stroke="#000" stroke-width="2.800"/></svg></div><div style="position:absolute;left:1594px;top:924.5px;width:54px;height:54.0px;background:#4b5b7e;border-radius:50%;box-shadow:0 2px 8px rgba(0,0,0,.35)"><svg style="left:12px;top:12px" width="30" height="30" viewBox="0 0 30 30"><path d="M20.600 24.400A12.500 12.500 0 1 1 26.400 16.800L28.800 27.800z" fill="none" stroke="#fff" stroke-width="2.600" stroke-linejoin="round"/></svg></div>
<div style="position:absolute;left:0px;top:1007px;width:1676px;height:39px;background:#000"></div>
<div style="position:absolute;left:1674px;top:0px;width:2px;height:1046px;background:#e0142a"></div>
<div style="position:absolute;left:0px;top:1044px;width:1676px;height:2px;background:#e0142a"></div>
<div id="popupshadow" style="position:absolute;left:153px;top:43px;width:1118px;height:647px;box-shadow:0 3px 18px rgba(0,0,0,.26)"></div>
<div style="position:absolute;left:153px;top:43px;width:1118px;height:647px;background:#dee1e6;border:1px solid #4a4a4a;border-left-color:#6e6e6e;box-sizing:border-box"></div><div style="position:absolute;left:154px;top:85px;width:1116px;height:69px;background:#fff;border-bottom:1px solid #dadce0;box-sizing:border-box"></div><svg style="left:154px;top:52px" width="257" height="33" viewBox="0 0 257 33"><path d="M0 33c5 0 8-3 8-8V8c0-5 3-8 8-8h224c5 0 8 3 8 8v17c0 5 3 8 8 8z" fill="#fff"/></svg><span class="t" id="t77" style="left:198.0px;top:61.5px;font-size:12px;line-height:15px;color:#3c4043;transform:scaleX(0.9459);">Enteros UpBeat Performance Expl</span><div style="position:absolute;left:352px;top:56px;width:24px;height:26px;background:linear-gradient(90deg,rgba(255,255,255,0),#fff)"></div><svg style="left:381px;top:64.500px" width="9" height="9" viewBox="0 0 9 9"><path d="M.8.800l7.400 7.400M8.200.800L.8 8.200" stroke="#3c4043" stroke-width="1.500"/></svg><svg style="left:417px;top:63px" width="12" height="12" viewBox="0 0 12 12"><path d="M6 0v12M0 6h12" stroke="#3c4043" stroke-width="1.600"/></svg><svg style="left:1103px;top:54.500px" width="12" height="7" viewBox="0 0 12 7"><path d="M.5.500L6 6l5.500-5.500" fill="none" stroke="#222" stroke-width="1.100"/></svg><div style="position:absolute;left:1149.5px;top:58px;width:10.0px;height:1px;background:#222"></div><div style="position:absolute;left:1195.5px;top:53px;width:10.0px;height:10px;border:1px solid #222;box-sizing:border-box"></div><svg style="left:1241px;top:53px" width="11" height="11" viewBox="0 0 11 11"><path d="M.5.500l10 10M10.500.500l-10 10" stroke="#222" stroke-width="1.100"/></svg><svg style="left:167.7px;top:96px" width="16" height="16" viewBox="0 0 16 16"><path d="M14 8H2.5M8 2.3L2.3 8 8 13.7" fill="none" stroke="#b4b7bb" stroke-width="2"/></svg><svg style="left:200px;top:96px" width="16" height="16" viewBox="0 0 16 16"><path d="M2 8h11.5M8 2.3L13.7 8 8 13.7" fill="none" stroke="#b4b7bb" stroke-width="2"/></svg><svg style="left:231.5px;top:96px" width="16" height="16" viewBox="0 0 16 16"><path d="M13.2 5.2A6 6 0 1 0 14 8" fill="none" stroke="#55585c" stroke-width="2.1"/><path d="M14.6 1.4v5.2H9.4z" fill="#55585c"/></svg><svg style="left:263.7px;top:96px" width="16" height="16" viewBox="0 0 16 16"><path d="M1.2 8.3L8 1.8l6.8 6.5M3.3 6.8v7.4h9.4V6.8" fill="none" stroke="#55585c" stroke-width="2"/></svg><div style="position:absolute;left:294px;top:90px;width:355px;height:27px;background:#f1f3f4;border-radius:14px"></div><svg style="left:304px;top:97px" width="14" height="14" viewBox="0 0 14 14"><circle cx="7" cy="7" r="6.200" fill="none" stroke="#5f6368" stroke-width="1.300"/><path d="M7 6.200v4.200" stroke="#5f6368" stroke-width="1.500"/><circle cx="7" cy="4" r=".9" fill="#5f6368"/></svg><span class="t" id="t78" style="left:327.5px;top:95.0px;font-size:14px;line-height:18px;color:#5f6368;transform:scaleX(1.0144);">about:</span><span class="t" id="t79" style="left:367.0px;top:95.0px;font-size:14px;line-height:18px;color:#202124;transform:scaleX(0.9950);">blank</span><svg style="left:592px;top:96.500px" width="16" height="15" viewBox="0 0 16 15"><path d="M5.500 4.500H1v10h11v-4" fill="none" stroke="#5f6368" stroke-width="1.300"/><path d="M4.500 10.500c.5-3.500 2.500-5.500 6-5.500V2l4.500 4.500L10.500 11V8c-3 0-4.500.5-6 2.500z" fill="none" stroke="#5f6368" stroke-width="1.300" stroke-linejoin="round"/></svg><svg style="left:624px;top:96px" width="16" height="16" viewBox="0 0 16 16"><path d="M8 1.500l2 4.500 4.800.500-3.600 3.200 1 4.800L8 12l-4.200 2.500 1-4.800L1.200 6.500 6 6z" fill="none" stroke="#5f6368" stroke-width="1.400" stroke-linejoin="round"/></svg><div style="position:absolute;left:659px;top:90px;width:506px;height:27px;background:#fff;border:1px solid #dfe1e5;border-radius:14px;box-sizing:border-box"></div><svg style="left:663.5px;top:95.0px" width="18" height="18" viewBox="0 0 18 18"><circle cx="9" cy="9" r="8" fill="#fde9a0"/><path d="M9 1.800l2.100 4.700 5.100.500-3.800 3.400 1.100 5L9 12.800l-4.500 2.600 1.100-5L1.800 7l5.100-.5z" fill="#e8141c"/></svg><svg style="left:695.7px;top:96.0px" width="16" height="16" viewBox="0 0 16 16"><circle cx="8" cy="8" r="8" fill="#bdbdbd"/></svg><span class="t" id="t80" style="left:700.2px;top:97.0px;font-size:11px;line-height:14px;color:#eee;font-weight:700;">K</span><svg style="left:727.7px;top:96.0px" width="16" height="16" viewBox="0 0 16 16"><rect width="16" height="16" fill="#333"/><path d="M3 3l10 10M13 3L3 13M8 3v10" stroke="#ddd" stroke-width="1.300" fill="none"/></svg><svg style="left:759.7px;top:96.0px" width="16" height="16" viewBox="0 0 16 16"><circle cx="8" cy="8" r="8" fill="#15c39a"/><path d="M11.500 5.200A4.300 4.300 0 1 0 12.300 8H8.500" fill="none" stroke="#fff" stroke-width="1.600"/></svg><svg style="left:791.7px;top:96.0px" width="16" height="16" viewBox="0 0 16 16"><circle cx="8" cy="8" r="7.600" fill="#0a8a1a"/><path d="M4.200 8.300l2.700 2.700 5-5.400" fill="none" stroke="#fff" stroke-width="2.200"/></svg><svg style="left:821.5px;top:93.0px" width="22" height="22" viewBox="0 0 22 22"><path d="M3 3h3v3H3zM5 8h3v3H5zM7 4h9M9 9h7" stroke="#333" stroke-width="1.300" fill="none"/><rect x="7" y="12" width="15" height="10" rx="1.500" fill="#3f5fc9"/></svg><span class="t" id="t81" style="left:829.5px;top:105.0px;font-size:9px;line-height:11px;color:#fff;font-weight:700;">32</span><svg style="left:855.7px;top:96.0px" width="16" height="16" viewBox="0 0 16 16"><rect x=".5" y=".5" width="15" height="15" rx="3" fill="#f3f7fc" stroke="#d5dde8"/><path d="M4.500 11.500a2.300 2.300 0 0 1 .300-4.600 3.300 3.300 0 0 1 6.300.600 2 2 0 0 1 .2 4z" fill="#3d95e8"/></svg><svg style="left:886.7px;top:95.0px" width="18" height="18" viewBox="0 0 18 18"><g stroke="#5b4ff0" stroke-width="2" stroke-linecap="round"><path d="M9 1.500v15M1.500 9h15M3.700 3.700l10.600 10.600M14.300 3.700L3.700 14.300M5.800 2l6.400 14M12.200 2L5.800 16"/></g><circle cx="9" cy="9" r="2.200" fill="#fff"/></svg><svg style="left:918.4px;top:95.0px" width="18" height="18" viewBox="0 0 18 18"><path d="M11 4.500l6.500 4.500-6.500 4.500z" fill="#f5c518"/><circle cx="8" cy="9" r="7" fill="#ee5a5f"/><circle cx="8.500" cy="9" r="1.300" fill="#222"/></svg><svg style="left:949.7px;top:95.0px" width="18" height="18" viewBox="0 0 18 18"><path d="M9 1l1.500 2h3.500v3.500l2.500 2.500-2.500 2.500V15H4v-3.500L1.500 9 4 6.500V3h3.500z" fill="#b9bcc0"/><circle cx="9" cy="9" r="5" fill="#a7aaad"/><path d="M6 10.500q3 2.400 6 0" stroke="#e8e8e8" stroke-width="1.200" fill="none"/></svg><svg style="left:978.5px;top:91.0px" width="26" height="26" viewBox="0 0 26 26"><path d="M5 15a8 8.500 0 0 1 16 0z" fill="#43a047"/><rect x="9.500" y="9" width="2" height="2.500" fill="#fff"/><rect x="14.500" y="9" width="2" height="2.500" fill="#fff"/><path d="M16 4l-2 3.500" stroke="#43a047" stroke-width="1.500"/><rect x="1" y="15" width="24" height="11.500" rx="2" fill="#43a047"/></svg><span class="t" id="t82" style="left:981.0px;top:106.0px;font-size:10px;line-height:12px;color:#fff;font-weight:700;transform:scaleX(0.9500);">Beta</span><svg style="left:1015.2px;top:95.0px" width="18" height="18" viewBox="0 0 18 18"><rect x="1" y="3.500" width="16" height="11" rx="3" fill="#a9c9dc" stroke="#5f9bb8" stroke-width="1.400"/><rect x="5.500" y="7" width="7" height="4" rx="1" fill="#fff"/></svg><svg style="left:1047.2px;top:95.0px" width="18" height="18" viewBox="0 0 18 18"><path d="M15.500 5A7.600 7.600 0 1 0 15.500 13" fill="none" stroke="#2f62f5" stroke-width="1.600"/><path d="M13.500 6.200A4.800 4.800 0 1 0 13.500 11.800" fill="none" stroke="#2f62f5" stroke-width="2"/><path d="M9 9h6" stroke="#2f62f5" stroke-width="2"/></svg><svg style="left:1079.2px;top:95.0px" width="18" height="18" viewBox="0 0 18 18"><circle cx="9" cy="9" r="8.300" fill="#2a6fb5"/><path d="M10 3.500v7a2.200 2.200 0 0 1-4 .8" fill="none" stroke="#fff" stroke-width="1.600"/></svg><svg style="left:1111.0px;top:95.0px" width="18" height="18" viewBox="0 0 18 18"><path d="M9 .8c5 0 8 3 8 7 0 4.500-4.500 9.400-8 9.400S1 12.300 1 7.800c0-4 3-7 8-7z" fill="#3a4fe0"/><path d="M3.300 8.500c2 0 4 1 4.500 3.500-2.500.5-4.500-1-4.500-3.500zM14.700 8.500c-2 0-4 1-4.500 3.500 2.500.5 4.500-1 4.500-3.500z" fill="#111"/></svg><svg style="left:1143.5px;top:96.0px" width="16" height="16" viewBox="0 0 16 16"><path transform="scale(.89)" d="M7 2.500a1.800 1.800 0 0 1 3.600 0V4H14a1 1 0 0 1 1 1v3.200h-1.300a1.900 1.900 0 0 0 0 3.800H15V15a1 1 0 0 1-1 1h-3.200v-1.300a1.900 1.900 0 0 0-3.800 0V16H4a1 1 0 0 1-1-1v-3.400h1.300a1.800 1.800 0 0 0 0-3.600H3V5a1 1 0 0 1 1-1h3z" fill="#444"/></svg><svg style="left:1175.5px;top:96.0px" width="16" height="16" viewBox="0 0 16 16"><rect x="1" y="1.500" width="14" height="13" fill="none" stroke="#444" stroke-width="2"/><rect x="9" y="1.500" width="6" height="13" fill="#444"/></svg><svg style="left:1204.5px;top:93.0px" width="22" height="22" viewBox="0 0 22 22"><circle cx="11" cy="11" r="11" fill="#5a55b8"/></svg><span class="t" id="t83" style="left:1211.5px;top:97.0px;font-size:12px;line-height:15px;color:#fff;">R</span><svg style="left:1246.0px;top:96.0px" width="4" height="16" viewBox="0 0 4 16"><circle cx="2" cy="2" r="1.600" fill="#5f6368"/><circle cx="2" cy="8" r="1.600" fill="#5f6368"/><circle cx="2" cy="14" r="1.600" fill="#5f6368"/></svg><svg style="left:168px;top:129.3px" width="14" height="14" viewBox="0 0 14 14"><rect x="0.5" y="0.5" width="3" height="3" fill="#e8231c"/><rect x="5.5" y="0.5" width="3" height="3" fill="#e8231c"/><rect x="10.5" y="0.5" width="3" height="3" fill="#e8231c"/><rect x="0.5" y="5.5" width="3" height="3" fill="#2e8b3d"/><rect x="5.5" y="5.5" width="3" height="3" fill="#4285f4"/><rect x="10.5" y="5.5" width="3" height="3" fill="#dba33b"/><rect x="0.5" y="10.5" width="3" height="3" fill="#2e8b3d"/><rect x="5.5" y="10.5" width="3" height="3" fill="#dba33b"/><rect x="10.5" y="10.5" width="3" height="3" fill="#dba33b"/></svg><span class="t" id="t84" style="left:192.0px;top:128.8px;font-size:12px;line-height:15px;color:#3c4043;transform:scaleX(0.9613);">Apps</span><svg style="left:233.5px;top:127.30000000000001px" width="18" height="18" viewBox="0 0 18 18"><circle cx="9" cy="10" r="6.2" fill="#4a3a8c"/><path d="M2.2 11V9a6.8 6.8 0 0 1 13.6 0v2" fill="none" stroke="#4a3a8c" stroke-width="1.6"/><rect x="1" y="8.5" width="2.8" height="5" rx="1.2" fill="#4a3a8c"/><rect x="14.2" y="8.5" width="2.8" height="5" rx="1.2" fill="#4a3a8c"/><circle cx="6.8" cy="9.3" r="1.1" fill="#fff"/><circle cx="11.2" cy="9.3" r="1.1" fill="#fff"/><path d="M6 12.2q3 2.2 6 0" stroke="#fff" stroke-width="1.1" fill="none"/></svg><span class="t" id="t85" style="left:259.0px;top:128.8px;font-size:12px;line-height:15px;color:#3c4043;transform:scaleX(0.9622);">Brain.fm</span><svg style="left:320px;top:129.3px" width="12" height="14" viewBox="0 0 12 14"><path d="M1.5.5h9a1 1 0 0 1 1 1v11a1 1 0 0 1-1 1h-9a1 1 0 0 1-1-1v-11a1 1 0 0 1 1-1z" fill="#fbe38a" stroke="#f2c94c" stroke-width="1"/><rect x="8.3" y="9.8" width="2.4" height="3" fill="#fff6cf" stroke="#f2c94c" stroke-width=".7"/></svg><span class="t" id="t86" style="left:343.0px;top:128.8px;font-size:12px;line-height:15px;color:#3c4043;transform:scaleX(0.9670);">Movies.ru</span><div style="position:absolute;left:410px;top:127.5px;width:16px;height:16.0px;background:#222;border-radius:3px"></div><span class="t" id="t87" style="left:412.0px;top:129.8px;font-size:10px;line-height:12px;color:#fff;font-weight:700;font-family:'Liberation Serif',serif;">re:</span><span class="t" id="t88" style="left:435.0px;top:128.8px;font-size:12px;line-height:15px;color:#3c4043;transform:scaleX(0.9570);">re:Work</span><svg style="left:492px;top:129.3px" width="14" height="14" viewBox="0 0 14 14"><circle cx="7" cy="7" r="6.6" fill="#5f6368"/><path d="M2 4.5c2 .2 3 1.5 2.6 3S6.5 9 7 11.5c1.500-.5 2-2 3.500-2.500S12.500 6 10.500 5 8 3 9 1.200" fill="none" stroke="#fff" stroke-width="1.400"/></svg><span class="t" id="t89" style="left:515.5px;top:128.8px;font-size:12px;line-height:15px;color:#3c4043;transform:scaleX(0.9445);">BarView</span><svg style="left:574.500px;top:127.500px" width="16" height="16" viewBox="0 0 16 16"><rect width="16" height="13" fill="#c8102e"/><path d="M2 1h3v4H2zM7 1h3v3H7zM11.500 1H14v5h-2.500zM2 7h2v4H2zM6 6h3v5H6zM11 8h3v3h-3z" fill="#fff"/><path d="M4.500 2v9M9 2v9" stroke="#111" stroke-width="1.200"/><rect y="13.500" width="16" height="2" fill="#999"/></svg><span class="t" id="t90" style="left:599.0px;top:128.8px;font-size:12px;line-height:15px;color:#3c4043;transform:scaleX(0.9751);">Bitwise Calculator</span><svg style="left:708.500px;top:127.500px" width="16" height="16" viewBox="0 0 16 16"><circle cx="8" cy="8" r="7.300" fill="#fde7c2" stroke="#f0a23c" stroke-width="1.200"/><circle cx="8" cy="8" r="4.600" fill="none" stroke="#f0a23c" stroke-width="1"/><path d="M6.500 5.500l4 3-2 .5 1 2-1 .5-1-2-1.500 1z" fill="#f0a23c"/></svg><span class="t" id="t91" style="left:732.5px;top:128.8px;font-size:12px;line-height:15px;color:#3c4043;transform:scaleX(0.9531);">Clicky</span><svg style="left:780.5px;top:129.3px" width="14" height="14" viewBox="0 0 14 14"><circle cx="7" cy="7" r="6.6" fill="#5f6368"/><path d="M2 4.5c2 .2 3 1.5 2.6 3S6.5 9 7 11.5c1.500-.5 2-2 3.500-2.500S12.500 6 10.500 5 8 3 9 1.200" fill="none" stroke="#fff" stroke-width="1.400"/></svg><span class="t" id="t92" style="left:803.7px;top:128.8px;font-size:12px;line-height:15px;color:#3c4043;transform:scaleX(0.9678);">Change This - We'r...</span><svg style="left:929px;top:129.3px" width="14" height="14" viewBox="0 0 14 14"><circle cx="7" cy="7" r="6.6" fill="#5f6368"/><path d="M2 4.5c2 .2 3 1.5 2.6 3S6.5 9 7 11.5c1.500-.5 2-2 3.500-2.500S12.500 6 10.500 5 8 3 9 1.200" fill="none" stroke="#fff" stroke-width="1.400"/></svg><span class="t" id="t93" style="left:952.0px;top:128.8px;font-size:12px;line-height:15px;color:#3c4043;transform:scaleX(1.0013);">Cold Calling Dont's</span><span class="t" id="t94" style="left:1108.5px;top:126.3px;font-size:14px;line-height:18px;color:#3c4043;font-weight:700;">»</span><div style="position:absolute;left:1127.5px;top:127.5px;width:1.0px;height:16.0px;background:#dadce0"></div><svg style="left:1140px;top:129.3px" width="12" height="14" viewBox="0 0 12 14"><path d="M1.5.5h9a1 1 0 0 1 1 1v11a1 1 0 0 1-1 1h-9a1 1 0 0 1-1-1v-11a1 1 0 0 1 1-1z" fill="#fbe38a" stroke="#f2c94c" stroke-width="1"/><rect x="8.3" y="9.8" width="2.4" height="3" fill="#fff6cf" stroke="#f2c94c" stroke-width=".7"/></svg><span class="t" id="t95" style="left:1162.5px;top:128.8px;font-size:12px;line-height:15px;color:#3c4043;transform:scaleX(0.9995);">Other bookmarks</span><div style="position:absolute;left:1253px;top:154px;width:17px;height:519px;background:#f1f1f1"></div><div style="position:absolute;left:1255px;top:308px;width:13px;height:72px;background:#c1c1c1"></div><svg style="left:1257.500px;top:160.500px" width="8" height="5" viewBox="0 0 8 5"><path d="M0 5h8L4 0z" fill="#505050"/></svg><svg style="left:1257.500px;top:661.500px" width="8" height="5" viewBox="0 0 8 5"><path d="M0 0h8L4 5z" fill="#505050"/></svg><div style="position:absolute;left:154px;top:673px;width:1116px;height:16px;background:#f1f1f1"></div><div style="position:absolute;left:171px;top:675px;width:1003px;height:13px;background:#c1c1c1"></div><svg style="left:159px;top:677px" width="5" height="8" viewBox="0 0 5 8"><path d="M5 0v8L0 4z" fill="#a3a3a3"/></svg><svg style="left:1241.500px;top:677.500px" width="5" height="8" viewBox="0 0 5 8"><path d="M0 0v8l5-4z" fill="#505050"/></svg><div style="position:absolute;left:1253px;top:673px;width:17px;height:16px;background:#dcdcdc"></div>
<div id="view" style="position:absolute;left:154px;top:154px;width:1099px;height:519px;background:#fff;overflow:hidden"><table class="g" style="left:8px;top:-19px;width:1150px"><colgroup><col style="width:218px"><col style="width:39px"><col style="width:493px"><col style="width:78px"><col style="width:65px"><col style="width:54px"><col style="width:41px"><col style="width:60px"><col style="width:80px"></colgroup><tr><td class="l"></td><td></td><td>FROM "CREDITTERM" "A2","SETTLETRANDATA" "A1" WHERE "A1"."LTV_TID"="A2"."LTV_TID" AND<br>"A1"."REC_CREATE_DT"&gt;=CAST(:1 AS TIMESTAMP) AND<br>"A1"."REC_CREATE_DT"&lt;CAST(:<br>2 AS TIMESTAMP) GROUP BY TRUNC("A1"."REC_CREATE_DT"),"A2"."ML_TID"</td><td></td><td class="n"></td><td class="n"></td><td class="n"></td><td class="n"></td><td></td></tr><tr><td class="l"><a>[python2.6@sstrthor1p (TNS V1-<br>V3)].73nzmncp9z8ns (Top SQLID:<br>bz9chcy5zyjpw)</a></td><td></td><td>SELECT B.HOSTNAME, B.AUTO_CLOSE_DT, T.ACTIVE FROM BATCHINFO B,<br>V_CREDITTERM T WH<br>ERE B.LTV_TID = :B1 AND T.LTV_TID = B.LTV_TID AND (B.COMM_SRC = 'PMS'<br>OR B.COMM_<br>SRC IS NULL) ORDER BY B.REC_CREATE_DT DESC</td><td class="r">db file<br>sequential<br>read</td><td class="n">12076.9</td><td class="n">4</td><td class="n">4</td><td class="n">3019.23</td><td>INST1<br>HOLD</td></tr><tr><td class="l"><a>null</a></td><td></td><td>N/A</td><td>os thread<br>startup</td><td class="n">3531.2</td><td class="n">1</td><td class="n">1</td><td class="n">3531.2</td><td>INST1<br>/UNKNOWN</td></tr><tr><td class="l"><a>[oracle@sstrthor1p (TNS V1-<br>V3)].fmwbhahq3nrm0</a></td><td></td><td>SELECT TRUNC("A1"."MSG_DT"),"A2"."ML_TID",COUNT("A1"."ML_TRAN_ID")<br>FROM "CREDITT<br>ERM" "A2","GETACCOUNT" "A1" WHERE "A1"."LTV_TID"="A2"."LTV_TID" AND<br>"A1"."MSG_DT<br>"&gt;=:B2 AND "A1"."MSG_DT"&lt;:B1 AND "A1"."TRAN_MODE"='M' GROUP BY<br>TRUNC("A1"."M<br>SG_DT"),"A2"."ML_TID"</td><td class="r">db file<br>sequential<br>read</td><td class="n">3112.1</td><td class="n">1</td><td class="n">8</td><td class="n">389.01</td><td>INST1<br>HOLD</td></tr><tr><td class="l"><a>null</a></td><td></td><td>N/A</td><td>db file<br>parallel write</td><td class="n">2948.8</td><td class="n">7</td><td class="n">17</td><td class="n">173.46</td><td>INST1<br>HOLD</td></tr><tr><td class="l"><a>[python2.6@sstrthor1p (TNS V1-V3)].</a></td><td></td><td>N/A</td><td>log file sync</td><td class="n">2496.6</td><td class="n">9</td><td class="n">9</td><td class="n">277.4</td><td>INST<br>1/VALUE</td></tr><tr><td class="l"><a>null</a></td><td></td><td>N/A</td><td>log file<br>parallel write</td><td class="n">2279.5</td><td class="n">1</td><td class="n">10</td><td class="n">227.95</td><td>INST1<br>HOLD</td></tr><tr><td class="l"><a>[MessageProcessor.exe].667s6u986fxpv</a></td><td></td><td>/* LTV query to get the TERM_ID based on the Comp and Site Codes */ SELECT<br>ML_T<br>ID, COMP_CD, SITE_CD, COMP_CD || SITE_CD AS COMP_SITE,<br>MAX(TOTALS_DT) AS TRAN_DT<br>FROM CREDITTERM C JOIN BILLINGDAILY D ON D.LTV_TID = C.LTV_TID AND<br>D.TOTALS_DT<br>&gt;= TRUNC(SYSDATE - 2) WHERE C.ACTIVE = 1 GROUP BY ML_TID,<br>COMP_CD, SITE_CD</td><td class="r">db file<br>sequential<br>read</td><td class="n">1806.2</td><td class="n">1</td><td class="n">2</td><td class="n">903.1</td><td>INST1<br>HOLD</td></tr><tr><td class="l"></td><td></td><td>SELECT NVL(SUM(SETTLE_AMT),0) AMT, COUNT(*) CNT FROM<br>SETTLETRANDATA WHERE LTV_TI<br>D = :B1 AND SETTLE_DT &gt;= TRUNC(SYSDATE)<br>AND STATUS = 1</td><td></td><td class="n"></td><td class="n"></td><td class="n"></td><td class="n"></td><td></td></tr></table></div>
<svg style="left:0;top:0;filter:drop-shadow(1px 3px 3.5px rgba(0,0,0,.45))" width="1676" height="1046" viewBox="0 0 1676 1046"><rect x="865.600" y="173.500" width="161.100" height="477" rx="26" ry="26" fill="none" stroke="#f73c40" stroke-width="3"/><rect x="1326" y="261.500" width="324.600" height="604" rx="37" ry="37" fill="none" stroke="#f73c40" stroke-width="3.100"/></svg>
</body></html>
